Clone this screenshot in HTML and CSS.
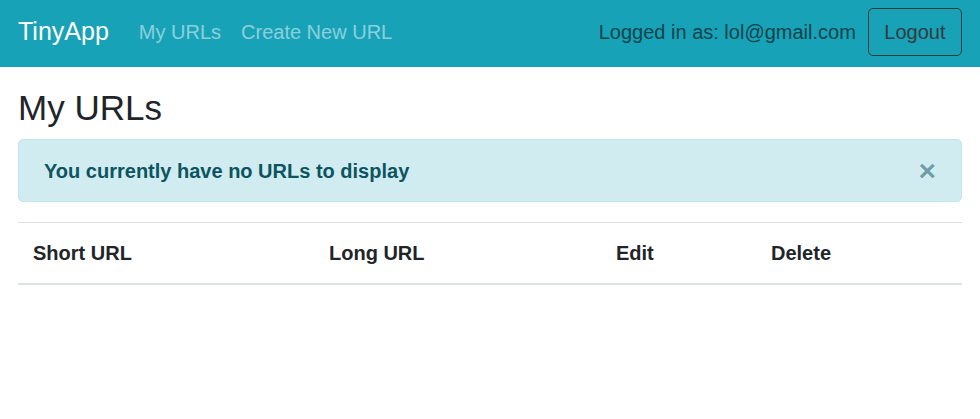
FILE: index.html
```html
<!DOCTYPE html>
<html lang="en">
<head>
<meta charset="utf-8">
<title>TinyApp</title>
<link rel="stylesheet" href="styles.css">
</head>
<body>
<nav class="navbar">
  <a class="brand" href="#">TinyApp</a>
  <ul class="nav-links">
    <li><a class="nav-link" href="#">My URLs</a></li>
    <li><a class="nav-link" href="#">Create New URL</a></li>
  </ul>
  <div class="nav-right">
    <span class="nav-text">Logged in as: lol@gmail.com</span>
    <button class="btn-logout" type="button">Logout</button>
  </div>
</nav>
<main class="container">
  <h3 class="page-title">My URLs</h3>
  <div class="alert">
    <strong class="alert-text">You currently have no URLs to display</strong>
    <button class="close" type="button" aria-label="Close">&times;</button>
  </div>
  <table class="table">
    <thead>
      <tr>
        <th class="col-short">Short URL</th>
        <th class="col-long">Long URL</th>
        <th class="col-edit">Edit</th>
        <th class="col-delete">Delete</th>
      </tr>
    </thead>
    <tbody></tbody>
  </table>
</main>
</body>
</html>
```
FILE: styles.css
```css
* { box-sizing: border-box; }
html, body {
  margin: 0;
  padding: 0;
  background: #fff;
}
body {
  font-family: "Liberation Sans", Arial, sans-serif;
  font-size: 20px;
  line-height: 1.5;
  color: #212529;
}
.navbar {
  display: flex;
  align-items: center;
  height: 67px;
  padding: 8px 18px 11px 18px;
  background: #17a2b8;
}
.brand {
  font-size: 25px;
  line-height: 1.5;
  color: #fff;
  text-decoration: none;
  margin-right: 20px;
}
.nav-links {
  display: flex;
  list-style: none;
  margin: 0;
  padding: 0;
}
.nav-link {
  display: block;
  padding: 0 10px;
  font-size: 20px;
  line-height: 30px;
  color: rgba(255, 255, 255, 0.5);
  text-decoration: none;
}
.nav-right {
  margin-left: auto;
  display: flex;
  align-items: center;
  gap: 12px;
}
.nav-text {
  color: #0f444b;
  font-size: 20px;
  line-height: 30px;
}
.btn-logout {
  font-family: inherit;
  font-size: 20px;
  line-height: 30px;
  padding: 8px 15.5px;
  color: #343a40;
  background: transparent;
  border: 1px solid #343a40;
  border-radius: 5px;
}
.container {
  padding: 20px 18px 0 18px;
}
.page-title {
  margin: 0 0 10px 0;
  font-size: 35px;
  font-weight: 500;
  line-height: 1.2;
}
.alert {
  display: flex;
  align-items: center;
  justify-content: space-between;
  height: 63px;
  padding: 0 25px;
  margin-bottom: 20px;
  background: #d1ecf1;
  border: 1px solid #bee5eb;
  border-radius: 5px;
  color: #0c5460;
}
.alert-text {
  font-weight: 700;
  font-size: 20px;
}
.close {
  background: transparent;
  border: 0;
  padding: 0;
  font-family: inherit;
  font-size: 30px;
  font-weight: 700;
  line-height: 1;
  color: #0c5460;
  opacity: 0.5;
  text-shadow: 0 1px 0 #fff;
}
.table {
  width: 100%;
  border-collapse: collapse;
  table-layout: fixed;
}
.table th {
  text-align: left;
  font-weight: 700;
  padding: 15px;
  line-height: 30px;
  border-top: 1px solid #dee2e6;
  border-bottom: 2px solid #dee2e6;
}
.col-short { width: 296px; }
.col-long { width: 287px; }
.col-edit { width: 155px; }
.col-delete { width: auto; }
```
